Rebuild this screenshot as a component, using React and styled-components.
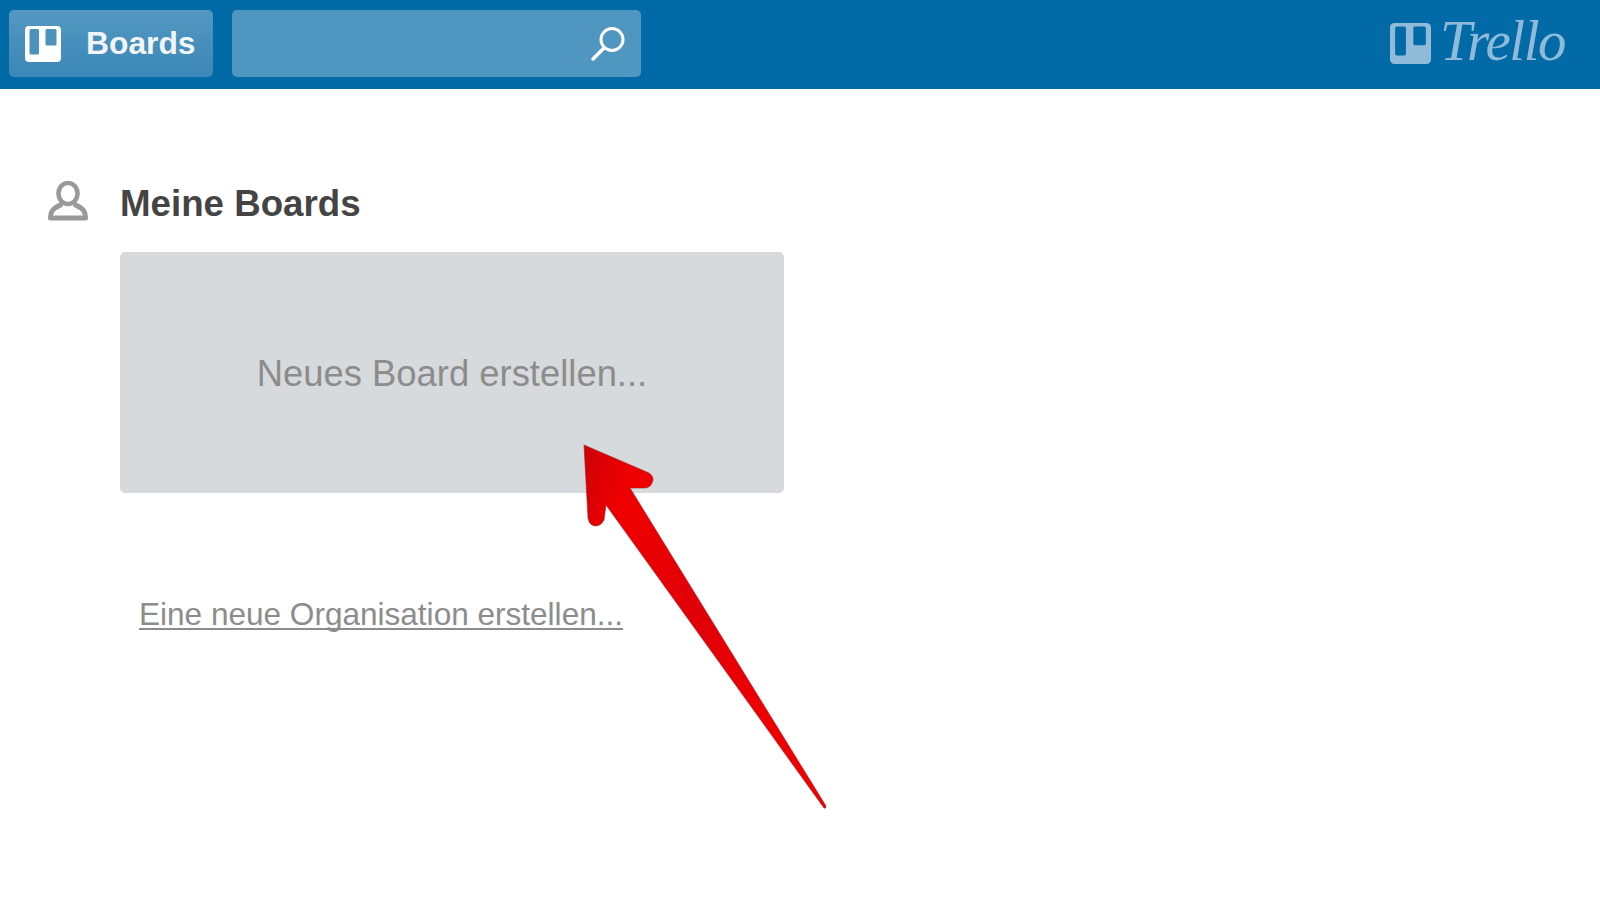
import React from 'react'
import styled, { createGlobalStyle } from 'styled-components'

const Global = createGlobalStyle`
  html, body { margin: 0; padding: 0; background: #fff; }
  body { font-family: "Liberation Sans", Arial, sans-serif; overflow: hidden; }
`

const Page = styled.div`
  position: relative;
  width: 1600px;
  height: 900px;
  overflow: hidden;
`

const Header = styled.header`
  height: 89px;
  box-sizing: border-box;
  padding: 10px 35px 12px 9px;
  background: #026aa7;
  display: flex;
  align-items: stretch;
  justify-content: space-between;
`

const HeaderLeft = styled.div`
  display: flex;
  gap: 19px;
`

const BoardsButton = styled.div`
  width: 204px;
  box-sizing: border-box;
  padding-left: 16px;
  border-radius: 5px;
  background: linear-gradient(#5398c1, #3b87b7);
  display: flex;
  align-items: center;
  gap: 25px;
  color: #f2f5f8;
  font-size: 31.8px;
  font-weight: 700;
`

const SearchBox = styled.div`
  width: 409px;
  box-sizing: border-box;
  padding-right: 14px;
  border-radius: 5px;
  background: #4f97c1;
  display: flex;
  align-items: center;
  justify-content: flex-end;
`

const Logo = styled.div`
  display: flex;
  align-items: center;
  gap: 9px;
`

const LogoText = styled.span`
  font-family: "Liberation Serif", serif;
  font-style: italic;
  font-size: 57px;
  line-height: 1;
  letter-spacing: -1.5px;
  color: #8fbbd8;
  margin-top: -6px;
`

const Main = styled.main`
  padding: 91px 0 0 48px;
`

const TitleRow = styled.div`
  display: flex;
  align-items: center;
  gap: 32px;
  height: 42px;
`

const Title = styled.h2`
  margin: 5px 0 0;
  font-size: 36.7px;
  font-weight: 700;
  color: #444;
`

const NewBoard = styled.div`
  margin: 30px 0 0 72px;
  width: 664px;
  height: 241px;
  border-radius: 5px;
  background: #d6dadc;
  display: flex;
  align-items: center;
  justify-content: center;
  color: #8c8c8c;
  font-size: 36.4px;
`

const NewBoardLabel = styled.span`
  margin-top: 2px;
`

const OrgLink = styled.a`
  display: inline-block;
  margin: 103px 0 0 91px;
  color: #8c8c8c;
  font-size: 31.55px;
  text-decoration: underline;
  text-decoration-thickness: 2px;
  text-decoration-skip-ink: none;
  text-underline-offset: 3px;
`

const Arrow = styled.svg`
  position: absolute;
  left: 570px;
  top: 435px;
`

const BoardIcon = ({ size, color, hole }) => (
  <svg width={size} height={size} viewBox="0 0 36 36">
    <rect width="36" height="36" rx="4" fill={color} />
    <rect x="4.5" y="3" width="9.5" height="25.5" rx="1.5" fill={hole} />
    <rect x="20.5" y="3" width="11" height="16.5" rx="1.5" fill={hole} />
  </svg>
)

const App = () => {
  return (
    <Page>
      <Global />
      <Header>
        <HeaderLeft>
          <BoardsButton>
            <BoardIcon size={36} color="#fff" hole="#4b92bd" />
            <span>Boards</span>
          </BoardsButton>
          <SearchBox>
            <svg width="38" height="38" viewBox="0 0 38 38" fill="none" stroke="#fff" strokeLinecap="round">
              <circle cx="23" cy="14.5" r="11" strokeWidth="3" />
              <path d="M15 23 L4 34" strokeWidth="3.5" />
            </svg>
          </SearchBox>
        </HeaderLeft>
        <Logo>
          <BoardIcon size={41} color="#8fbbd8" hole="#026aa7" />
          <LogoText>Trello</LogoText>
        </Logo>
      </Header>
      <Main>
        <TitleRow>
          <svg width="40" height="40" viewBox="0 0 40 40" fill="none" stroke="#999" strokeLinejoin="round">
            <ellipse cx="20" cy="12.5" rx="9.5" ry="10.5" strokeWidth="4.5" />
            <path d="M14 23 L7 27 Q2.5 30 2.5 37 L37.5 37 Q37.5 30 33 27 L26 23" strokeWidth="5" />
          </svg>
          <Title>Meine Boards</Title>
        </TitleRow>
        <NewBoard>
          <NewBoardLabel>Neues Board erstellen...</NewBoardLabel>
        </NewBoard>
        <OrgLink>Eine neue Organisation erstellen...</OrgLink>
      </Main>
      <Arrow width="270" height="385" viewBox="570 435 270 385">
        <defs>
          <linearGradient id="red" x1="0" y1="0" x2="1" y2="0.45">
            <stop offset="0" stopColor="#cf0008" />
            <stop offset="0.2" stopColor="#f00000" />
            <stop offset="0.55" stopColor="#e00008" />
            <stop offset="1" stopColor="#f00000" />
          </linearGradient>
        </defs>
        <path
          d="M584 445 L649 473 Q655 477 652 483 Q650 488 644 488 L630 488 L826 806 Q826 809 824 808 L606 505 L604 520 Q601 526 595 526 Q589 525 588 518 Z"
          fill="url(#red)"
          stroke="#9c2226"
          strokeWidth="0.6"
        />
      </Arrow>
    </Page>
  )
}

export default App
